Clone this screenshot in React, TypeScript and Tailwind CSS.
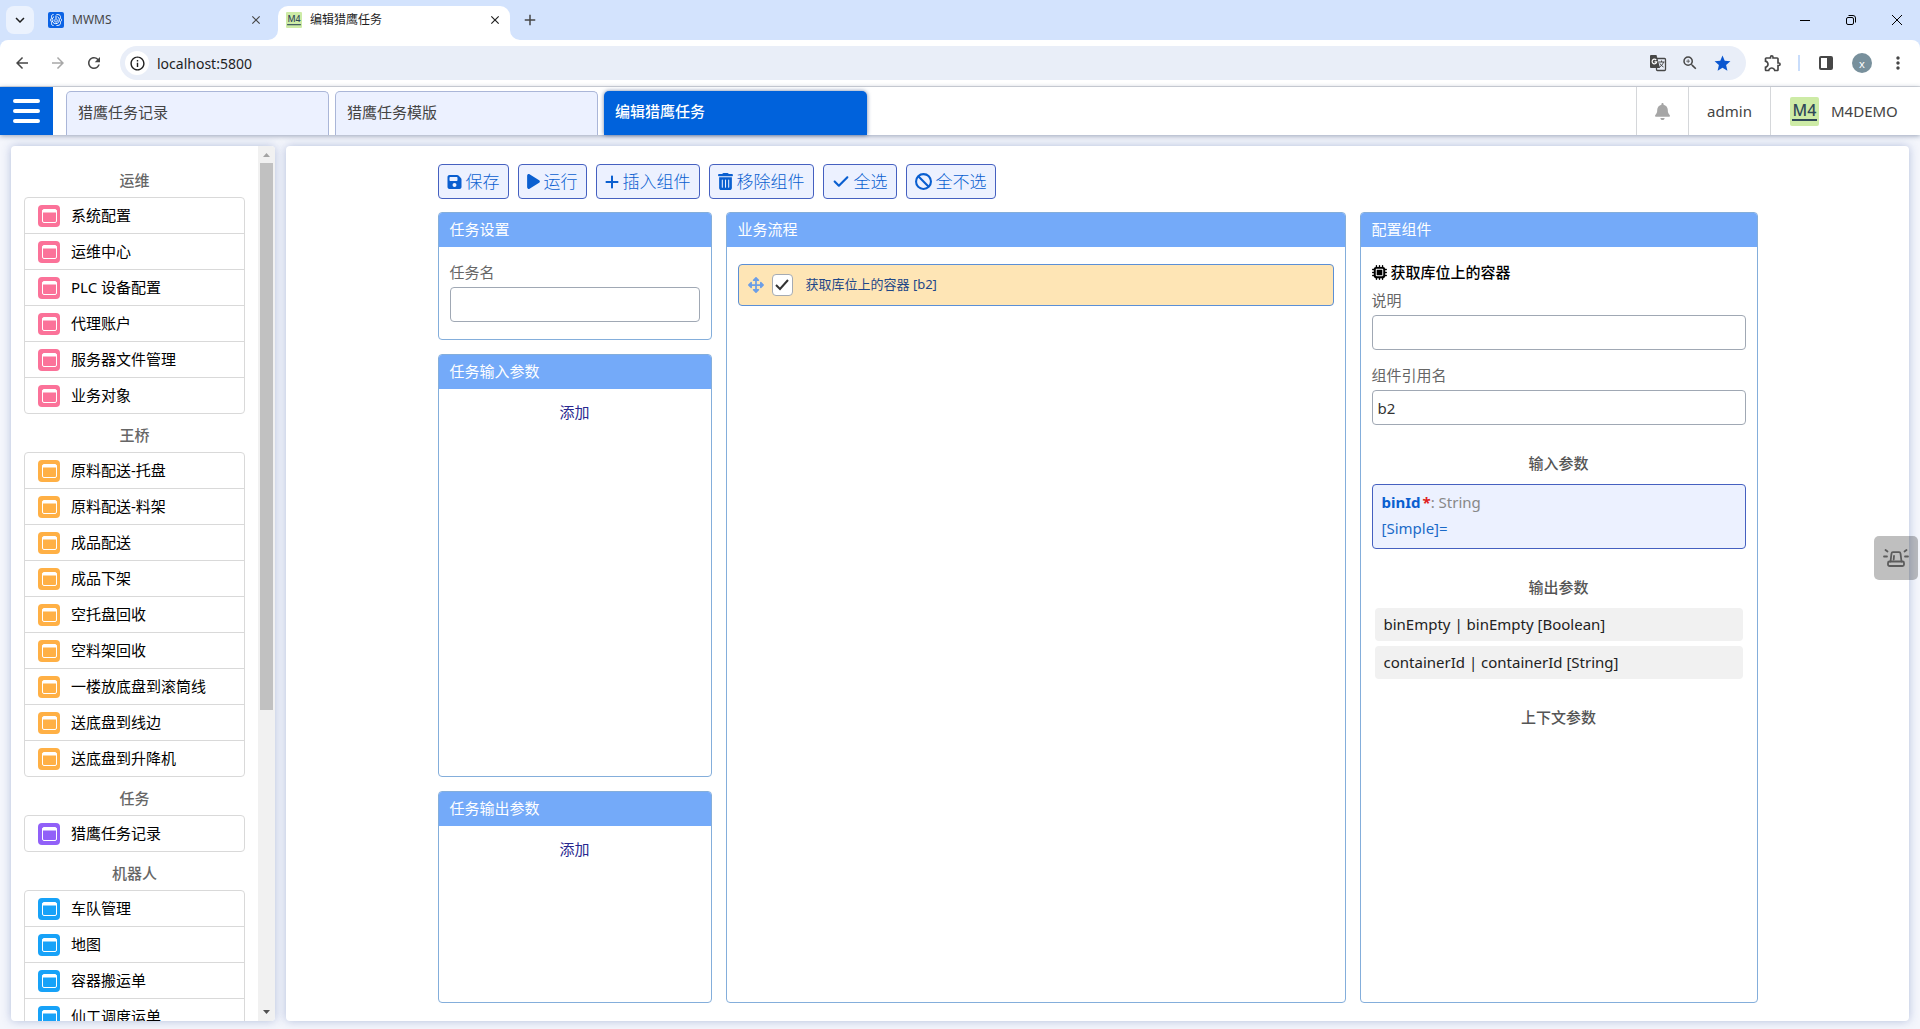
import { useState } from 'react';
import type { ReactNode } from 'react';
import { FaArrowsAlt } from 'react-icons/fa';
import { FaBan, FaBell, FaCheck, FaFloppyDisk, FaMicrochip, FaPlay, FaPlus, FaTrashCan } from 'react-icons/fa6';
import {
  MdAdd,
  MdArrowBack,
  MdArrowForward,
  MdClose,
  MdInfoOutline,
  MdKeyboardArrowDown,
  MdMoreVert,
  MdOutlineExtension,
  MdRefresh,
  MdStar,
  MdZoomIn,
} from 'react-icons/md';

const pageTabs = ['猎鹰任务记录', '猎鹰任务模版', '编辑猎鹰任务'];

const menuGroups = [
  {
    title: '运维',
    iconClass: 'text-[#fb7299]',
    items: ['系统配置', '运维中心', 'PLC 设备配置', '代理账户', '服务器文件管理', '业务对象'],
  },
  {
    title: '王桥',
    iconClass: 'text-[#ffb045]',
    items: [
      '原料配送-托盘',
      '原料配送-料架',
      '成品配送',
      '成品下架',
      '空托盘回收',
      '空料架回收',
      '一楼放底盘到滚筒线',
      '送底盘到线边',
      '送底盘到升降机',
    ],
  },
  { title: '任务', iconClass: 'text-[#9160f8]', items: ['猎鹰任务记录'] },
  {
    title: '机器人',
    iconClass: 'text-[#17a2f8]',
    items: ['车队管理', '地图', '容器搬运单', '仙工调度运单'],
  },
];

const actions = [
  { label: '保存', icon: <FaFloppyDisk className="h-4 w-[15px]" /> },
  { label: '运行', icon: <FaPlay className="h-[17px] w-[13px]" /> },
  { label: '插入组件', icon: <FaPlus className="h-4 w-[14px]" /> },
  { label: '移除组件', icon: <FaTrashCan className="h-[17px] w-[15px]" /> },
  { label: '全选', icon: <FaCheck className="h-[17px] w-[18px]" /> },
  { label: '全不选', icon: <FaBan className="size-[17px]" /> },
];

const outputParams = ['binEmpty | binEmpty [Boolean]', 'containerId | containerId [String]'];

function M4Logo({ size }: { size: number }) {
  return (
    <svg width={size} height={size} viewBox="0 0 29 29" aria-hidden="true" className="shrink-0">
      <rect width="29" height="29" rx="2" fill="#cdeba6" />
      <text x="14.5" y="19" textAnchor="middle" fontSize="16" fontWeight="500" fill="#2f4858" fontFamily="Noto Sans">
        M4
      </text>
      <rect x="2" y="22" width="25" height="2" fill="#2f4858" />
    </svg>
  );
}

function MwmsLogo() {
  return (
    <svg width="16" height="16" viewBox="0 0 16 16" aria-hidden="true" className="shrink-0">
      <rect width="16" height="16" rx="2" fill="#0b63e5" />
      <g fill="none" stroke="#fff" strokeWidth="1">
        <path d="M5.500 2.500C3.500 2.500 3.500 4 3.500 5.500S2.500 7.500 2 8c.5.5 1.500 1 1.500 2.500s0 3 2 3M8.500 2.500c4 0 4 1.500 4 3s1 2 1.500 2.500c-.5.5-1.500 1-1.500 2.500s0 3-4 3" />
        <path d="M6 4.700A3.700 3.700 0 1 0 9.500 4.700M8 3.500V8.500M6.200 7.500a1.900 1.900 0 1 0 3.600 0" />
      </g>
    </svg>
  );
}

function TranslateIcon() {
  return (
    <svg width="18" height="18" viewBox="0 0 18 18" aria-hidden="true">
      <rect x="7.500" y="4.500" width="9" height="12" rx="1" fill="none" stroke="currentColor" strokeWidth="1.300" />
      <path d="M9.500 8h6M12.500 6.500V8M14.500 8c-.5 2-2 4-4 5M11 9.500c.8 1.500 2 2.800 3.500 3.500" fill="none" stroke="currentColor" />
      <path d="M2 1h5.500L11 14H2a1 1 0 0 1-1-1V2a1 1 0 0 1 1-1z" fill="currentColor" />
      <path d="M7.200 6A2.300 2.300 0 1 0 7.700 7.800H5.500" fill="none" stroke="#fff" strokeWidth="1.200" />
    </svg>
  );
}

function WindowIcon({ className }: { className: string }) {
  return (
    <svg width="22" height="22" viewBox="0 0 22 22" aria-hidden="true" className={className}>
      <rect width="22" height="22" rx="4" fill="currentColor" />
      <rect x="4.500" y="4.500" width="14" height="13" rx="1.500" fill="none" stroke="#fff" />
      <path d="M4.500 5h14v2.500h-14z" fill="#fff" />
    </svg>
  );
}

function BrowserChrome() {
  return (
    <header className="shrink-0 border-b border-[#dcdee1] bg-[#d3e3fd] text-[#474747]">
      <div className="flex h-10 items-center">
        <button aria-label="Search tabs" className="ml-[6px] flex size-7 items-center justify-center rounded-lg bg-[#ebf2fe] text-[#1f1f1f]">
          <MdKeyboardArrowDown size={18} />
        </button>
        <div className="ml-[14px] flex w-[215px] items-center">
          <MwmsLogo />
          <span className="ml-2 flex-1 text-[12px]">MWMS</span>
          <button aria-label="Close tab">
            <MdClose size={14} />
          </button>
        </div>
        <div className="relative ml-[15px] mt-[6px] flex h-[34px] w-[232px] items-center rounded-t-[10px] bg-white px-2 pb-[6px] text-[#1f1f1f]">
          <svg width="10" height="10" className="absolute bottom-0 -left-[10px]" aria-hidden="true">
            <path d="M10 0v10H0A10 10 0 0 0 10 0z" fill="#fff" />
          </svg>
          <svg width="10" height="10" className="absolute -right-[10px] bottom-0" aria-hidden="true">
            <path d="M0 0v10h10A10 10 0 0 1 0 0z" fill="#fff" />
          </svg>
          <M4Logo size={16} />
          <span className="ml-2 flex-1 text-[12px]">编辑猎鹰任务</span>
          <button aria-label="Close tab">
            <MdClose size={14} />
          </button>
        </div>
        <button aria-label="New tab" className="ml-[11px]">
          <MdAdd size={18} />
        </button>
        <div className="mr-[16px] ml-auto flex items-center gap-[32px] text-black">
          <button aria-label="Minimize" className="flex size-[14px] items-center justify-center">
            <svg width="10" height="10" fill="none" stroke="currentColor">
              <path d="M0 5.500h10" />
            </svg>
          </button>
          <button aria-label="Restore" className="flex size-[14px] items-center justify-center">
            <svg width="10" height="10" fill="none" stroke="currentColor">
              <rect x=".5" y="2.500" width="7" height="7" rx="1.500" />
              <path d="M2.500.5H7A2.500 2.500 0 0 1 9.500 3v4.500" />
            </svg>
          </button>
          <button aria-label="Close" className="flex size-[14px] items-center justify-center">
            <svg width="10" height="10" fill="none" stroke="currentColor">
              <path d="M0 0l10 10M10 0L0 10" />
            </svg>
          </button>
        </div>
      </div>
      <div className="flex h-[46px] items-center rounded-t-lg bg-white pr-3 pl-[13px]">
        <div className="flex items-center gap-[18px]">
          <button aria-label="Back">
            <MdArrowBack size={18} />
          </button>
          <button aria-label="Forward" className="text-[#a8a8a8]">
            <MdArrowForward size={18} />
          </button>
          <button aria-label="Reload">
            <MdRefresh size={18} />
          </button>
        </div>
        <div className="ml-[17px] flex h-[34px] flex-1 items-center rounded-full bg-[#e9eef8] pr-[14px] pl-[5px]">
          <span className="flex size-6 items-center justify-center rounded-full bg-white text-[#1f1f1f]">
            <MdInfoOutline size={17} />
          </span>
          <input
            aria-label="Address"
            defaultValue="localhost:5800"
            className="ml-2 min-w-0 flex-1 bg-transparent text-[14px] text-[#1f1f1f] outline-none"
          />
          <div className="flex items-center gap-[14px]">
            <TranslateIcon />
            <MdZoomIn size={18} />
            <MdStar size={19} className="text-[#0b57d0]" />
          </div>
        </div>
        <div className="ml-[17px] flex items-center">
          <MdOutlineExtension size={20} />
          <span className="ml-[15px] h-4 w-[2px] bg-[#c9ddfb]" />
          <svg width="14" height="14" className="ml-[19px]" aria-hidden="true">
            <rect x="1" y="1" width="12" height="12" rx="1" fill="none" stroke="currentColor" strokeWidth="2" />
            <path d="M8 1h5v12H8z" fill="currentColor" />
          </svg>
          <span className="ml-[19px] flex size-5 items-center justify-center rounded-full bg-[#78909c] text-[11px] leading-none text-white">
            x
          </span>
          <MdMoreVert size={20} className="ml-[16px]" />
        </div>
      </div>
    </header>
  );
}

function AppHeader() {
  const [active, setActive] = useState(2);

  return (
    <div className="relative z-10 flex h-12 shrink-0 bg-white text-[15px] text-[#444] shadow-[0_1px_5px_rgba(40,60,100,0.45)]">
      <button aria-label="Menu" className="flex w-[53px] items-center justify-center bg-[#0062dc] text-white">
        <svg width="27" height="24" stroke="currentColor" strokeWidth="4" strokeLinecap="round" aria-hidden="true">
          <path d="M2 2h23M2 12h23M2 22h23" />
        </svg>
      </button>
      <nav className="ml-[13px] flex items-end gap-[6px]">
        {pageTabs.map((tab, i) => (
          <button
            key={tab}
            onClick={() => setActive(i)}
            className={
              i === active
                ? 'h-11 w-[263px] rounded-t-[5px] bg-[#0062dc] px-[11px] pb-[3px] text-left font-medium text-white shadow-[0_0_4px_rgba(20,50,110,0.6)]'
                : 'h-11 w-[263px] rounded-t-[5px] border border-b-0 border-[#aab6d8] bg-[#ecf1ff] px-[11px] pb-[3px] text-left'
            }
          >
            {tab}
          </button>
        ))}
      </nav>
      <div className="ml-auto flex">
        <button aria-label="Notifications" className="flex w-[52px] items-center justify-center border-l border-[#d5d7da] text-[#a6a6a6]">
          <FaBell size={17} />
        </button>
        <button className="w-[82px] border-l border-[#d5d7da]">admin</button>
        <div className="flex w-[150px] items-center gap-3 border-l border-[#d5d7da] pl-[19px]">
          <M4Logo size={29} />
          M4DEMO
        </div>
      </div>
    </div>
  );
}

function Sidebar() {
  return (
    <aside className="flex w-[264px] shrink-0 overflow-hidden rounded-[4px] bg-white shadow-[0_0_10px_rgba(60,90,160,0.35)]">
      <div className="min-w-0 flex-1 overflow-hidden px-[13px] pt-[13px]">
        {menuGroups.map((group) => (
          <section key={group.title}>
            <h2 className="pt-1 text-center text-[15px] leading-[34px] font-medium text-[#666]">{group.title}</h2>
            <ul className="rounded-[4px] border border-[#d9d9d9]">
              {group.items.map((item) => (
                <li key={item} className="border-b border-[#d9d9d9] last:border-b-0">
                  <a href="#" className="flex h-[35px] items-center gap-[11px] pl-[13px] text-[15px] text-black">
                    <WindowIcon className={group.iconClass} />
                    {item}
                  </a>
                </li>
              ))}
            </ul>
          </section>
        ))}
      </div>
      {/* Scrollbar */}
      <div className="flex w-[17px] flex-col items-center bg-[#f1f1f1]">
        <svg width="17" height="17" className="shrink-0 text-[#a3a3a3]" aria-hidden="true">
          <path d="M5 11l3.500-4 3.500 4z" fill="currentColor" />
        </svg>
        <div className="w-full flex-1 px-[2px]">
          <div className="h-[65%] bg-[#c1c1c1]" />
        </div>
        <svg width="17" height="17" className="shrink-0 text-[#505050]" aria-hidden="true">
          <path d="M5 6l3.500 4L12 6z" fill="currentColor" />
        </svg>
      </div>
    </aside>
  );
}

function Panel({ title, className = '', children }: { title: string; className?: string; children: ReactNode }) {
  return (
    <section className={`flex flex-col overflow-hidden rounded-[4px] border border-[#84aedb] ${className}`}>
      <h3 className="h-[34px] shrink-0 bg-[#74aaf9] px-[11px] text-[15px] leading-[33px] text-white">{title}</h3>
      <div className="flex-1 px-[11px] pt-[13px]">{children}</div>
    </section>
  );
}

function Field({ id, label, value = '' }: { id: string; label: string; value?: string }) {
  return (
    <div className="mb-[13px] flex flex-col gap-[3px]">
      <label htmlFor={id} className="leading-6 text-[#666]">
        {label}
      </label>
      <input
        id={id}
        defaultValue={value}
        className="h-[35px] w-full rounded-[4px] border border-[#a0a8b4] px-[5px] text-[#333] outline-none"
      />
    </div>
  );
}

function SubTitle({ children }: { children: ReactNode }) {
  return <h4 className="mt-[26px] mb-[9px] text-center leading-6 font-medium text-[#555]">{children}</h4>;
}

function AddButton() {
  return <button className="mx-auto block leading-5 text-[#28288f]">添加</button>;
}

function TaskEditor() {
  const [checked, setChecked] = useState(true);

  return (
    <main className="flex min-w-0 flex-1 justify-center rounded-[4px] bg-white py-[18px] shadow-[0_0_10px_rgba(60,90,160,0.35)]">
      <div className="flex w-full max-w-[1320px] flex-col gap-[13px] text-[15px]">
        <div className="flex gap-[9px]">
          {actions.map((action) => (
            <button
              key={action.label}
              className="flex h-[35px] items-center gap-1 rounded-[4px] border border-[#4560c0] bg-[#ecf1ff] px-2 text-[17px] font-light text-[#0a5fd0]"
            >
              {action.icon}
              {action.label}
            </button>
          ))}
        </div>

        <div className="flex flex-1 gap-[14px]">
          <div className="flex w-[274px] shrink-0 flex-col gap-[14px]">
            <Panel title="任务设置" className="pb-1">
              <Field id="task-name" label="任务名" />
            </Panel>
            <Panel title="任务输入参数" className="flex-[2]">
              <AddButton />
            </Panel>
            <Panel title="任务输出参数" className="flex-1">
              <AddButton />
            </Panel>
          </div>

          <Panel title="业务流程" className="min-w-0 flex-1">
            <div className="mt-1 flex h-[42px] items-center rounded-[4px] border border-[#5b8fd6] bg-[#fee5b5] pl-[9px]">
              <FaArrowsAlt size={16} className="text-[#6c9ee6]" />
              <label className="flex items-center text-[13px] text-[#1f4788]">
                <span className="relative ml-2 flex h-[22px] w-[21px] items-center justify-center">
                  <input
                    type="checkbox"
                    checked={checked}
                    onChange={() => setChecked(!checked)}
                    className="size-full appearance-none rounded-[4px] border border-[#a5abb3] bg-white"
                  />
                  {checked && (
                    <svg width="14" height="12" className="pointer-events-none absolute" fill="none" stroke="#333" strokeWidth="2">
                      <path d="M1 6l4 4 8-9" />
                    </svg>
                  )}
                </span>
                <span className="ml-[13px]">获取库位上的容器 [b2]</span>
              </label>
            </div>
          </Panel>

          <Panel title="配置组件" className="w-[398px] shrink-0">
            <div className="mb-1 flex items-center gap-1 leading-6 font-medium text-black">
              <FaMicrochip size={15} />
              获取库位上的容器
            </div>
            <Field id="description" label="说明" />
            <Field id="ref-name" label="组件引用名" value="b2" />

            <SubTitle>输入参数</SubTitle>
            <div className="h-[65px] rounded-[4px] border border-[#4560c0] bg-[#ecf1ff] px-[9px] py-1 leading-[26px] text-[#1a6ac8]">
              <div className="text-[#888]">
                <b className="font-bold text-[#0a5fd0]">binId</b>
                <b className="ml-[2px] text-[#e02020]">*</b>: String
              </div>
              <div>[Simple]=</div>
            </div>

            <SubTitle>输出参数</SubTitle>
            <ul className="flex flex-col gap-[5px] px-[3px]">
              {outputParams.map((param) => (
                <li key={param} className="rounded-[4px] bg-[#f1f1f1] px-[9px] leading-[33px] text-[#222]">
                  {param}
                </li>
              ))}
            </ul>

            <SubTitle>上下文参数</SubTitle>
          </Panel>
        </div>
      </div>
    </main>
  );
}

function AlarmButton() {
  return (
    <button
      aria-label="Alarm"
      className="absolute top-1/2 right-[2px] z-20 flex size-11 -translate-y-1/2 items-center justify-center rounded-[5px] bg-black/25 text-[#5c5c5c]"
    >
      <svg width="26" height="20" viewBox="0 0 26 20" fill="none" stroke="currentColor" strokeWidth="1.800" strokeLinecap="round" strokeLinejoin="round">
        <rect x="5" y="13.500" width="16" height="4.500" rx="1.500" />
        <path d="M7.500 13.500l1-8a1.500 1.500 0 0 1 1.500-1.300h6a1.500 1.500 0 0 1 1.500 1.300l1 8M11 8l-.3 3.500M1 8.500h3M22 8.500h3M2.500 2l2 1.500M23.500 2l-2 1.500" />
      </svg>
    </button>
  );
}

export default function App() {
  return (
    <div className="flex h-screen flex-col overflow-hidden bg-[#f4f6fc] font-['Noto_Sans','Noto_Sans_CJK_SC',sans-serif]">
      <BrowserChrome />
      <div className="relative flex min-h-0 flex-1 flex-col">
        <AppHeader />
        <div className="flex min-h-0 flex-1 gap-[11px] px-[11px] pt-[11px] pb-2">
          <Sidebar />
          <TaskEditor />
        </div>
        <AlarmButton />
      </div>
    </div>
  );
}
